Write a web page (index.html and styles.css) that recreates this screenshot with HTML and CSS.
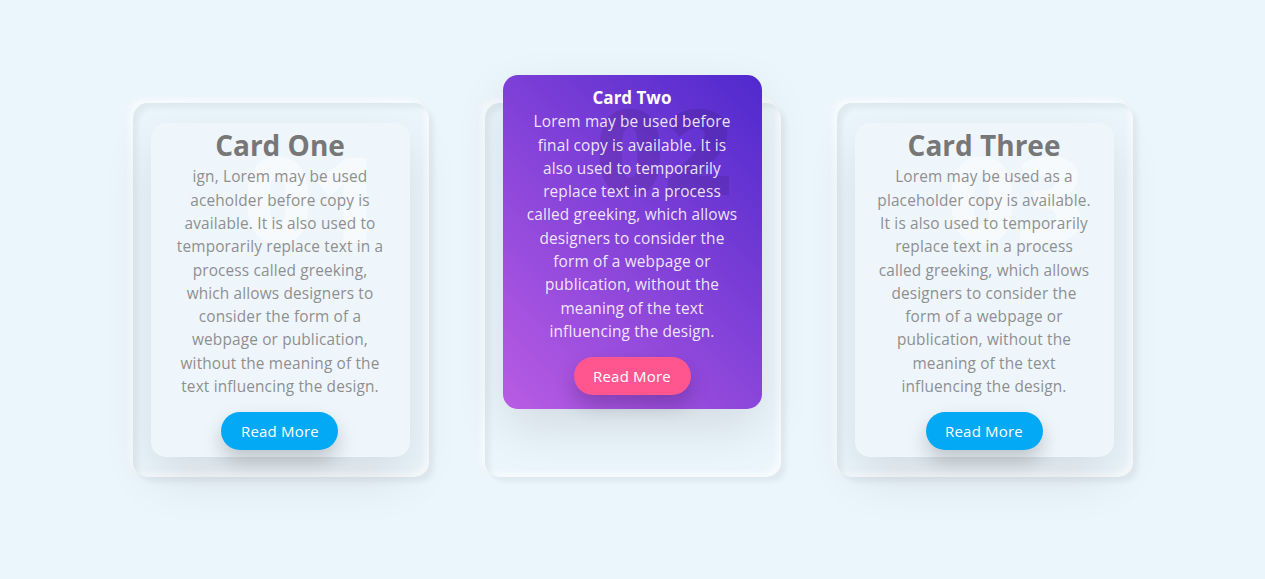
FILE: index.html
```html
<!DOCTYPE html>
<html lang="en">
<head>
<meta charset="utf-8">
<title>Cards</title>
<link rel="stylesheet" href="styles.css">
</head>
<body>
<div class="container">
  <div class="card">
    <div class="box">
      <span class="num">01</span>
      <div class="content">
        <h3 class="title">Card One</h3>
        <p class="text">ign, Lorem may be used<br>aceholder before copy is<br>available. It is also used to<br>temporarily replace text in a<br>process called greeking,<br>which allows designers to<br>consider the form of a<br>webpage or publication,<br>without the meaning of the<br>text influencing the design.</p>
        <a class="btn" href="#">Read More</a>
      </div>
    </div>
  </div>
  <div class="card">
    <div class="box box-active">
      <span class="num num-dark">02</span>
      <div class="content">
        <h3 class="title title-small">Card Two</h3>
        <p class="text text-light">Lorem may be used before<br>final copy is available. It is<br>also used to temporarily<br>replace text in a process<br>called greeking, which allows<br>designers to consider the<br>form of a webpage or<br>publication, without the<br>meaning of the text<br>influencing the design.</p>
        <a class="btn btn-pink" href="#">Read More</a>
      </div>
    </div>
  </div>
  <div class="card">
    <div class="box">
      <span class="num">03</span>
      <div class="content">
        <h3 class="title">Card Three</h3>
        <p class="text">Lorem may be used as a<br>placeholder copy is available.<br>It is also used to temporarily<br>replace text in a process<br>called greeking, which allows<br>designers to consider the<br>form of a webpage or<br>publication, without the<br>meaning of the text<br>influencing the design.</p>
        <a class="btn" href="#">Read More</a>
      </div>
    </div>
  </div>
</div>
</body>
</html>
```

FILE: styles.css
```css
* {
  box-sizing: border-box;
}

html, body {
  margin: 0;
  padding: 0;
}

body {
  min-height: 100vh;
  background: #ebf5fc;
  font-family: "Open Sans", "Noto Sans", sans-serif;
  display: flex;
  align-items: center;
  justify-content: center;
}

.container {
  display: flex;
  gap: 56px;
}

.card {
  width: 296px;
  height: 374px;
  border-radius: 15px;
  padding: 20px 19px 20px 18px;
  display: flex;
  box-shadow:
    inset 5px 5px 5px rgba(0, 0, 0, 0.05),
    inset -5px -5px 5px rgba(255, 255, 255, 0.5),
    5px 5px 5px rgba(0, 0, 0, 0.05),
    -5px -5px 5px rgba(255, 255, 255, 0.5);
}

.box {
  position: relative;
  flex: 1;
  border-radius: 15px;
  background: #eef6fc;
  box-shadow: 0 20px 50px rgba(0, 0, 0, 0.1);
  display: flex;
  align-items: center;
  justify-content: center;
}

.box-active {
  background: linear-gradient(45deg, #b95ce4, #4f29cd);
  transform: translateY(-48px);
}

.num {
  position: absolute;
  top: 4px;
  right: 28px;
  font-size: 118px;
  font-weight: 800;
  line-height: 1.2;
  color: rgba(255, 255, 255, 0.45);
  pointer-events: none;
}

.num-dark {
  color: rgba(0, 0, 0, 0.1);
}

.content {
  position: relative;
  display: flex;
  flex-direction: column;
  align-items: center;
  text-align: center;
}

.title {
  margin: 0 0 3px;
  font-size: 28px;
  line-height: 1.2;
  font-weight: 700;
  color: #777;
}

.title-small {
  font-size: 17px;
  color: #fff;
  margin-bottom: 2px;
}

.text {
  margin: 0;
  font-size: 15.4px;
  letter-spacing: 0.15px;
  line-height: 23.3px;
  color: #8f8f8f;
  white-space: nowrap;
}

.text-light {
  color: rgba(255, 255, 255, 0.88);
}

.btn {
  margin-top: 14px;
  height: 38px;
  width: 117px;
  display: flex;
  align-items: center;
  justify-content: center;
  border-radius: 20px;
  background: #03a9f4;
  color: #fff;
  font-size: 15px;
  letter-spacing: 0.2px;
  text-decoration: none;
  box-shadow: 0 10px 20px rgba(0, 0, 0, 0.2);
}

.btn-pink {
  background: #ff568f;
}
```
